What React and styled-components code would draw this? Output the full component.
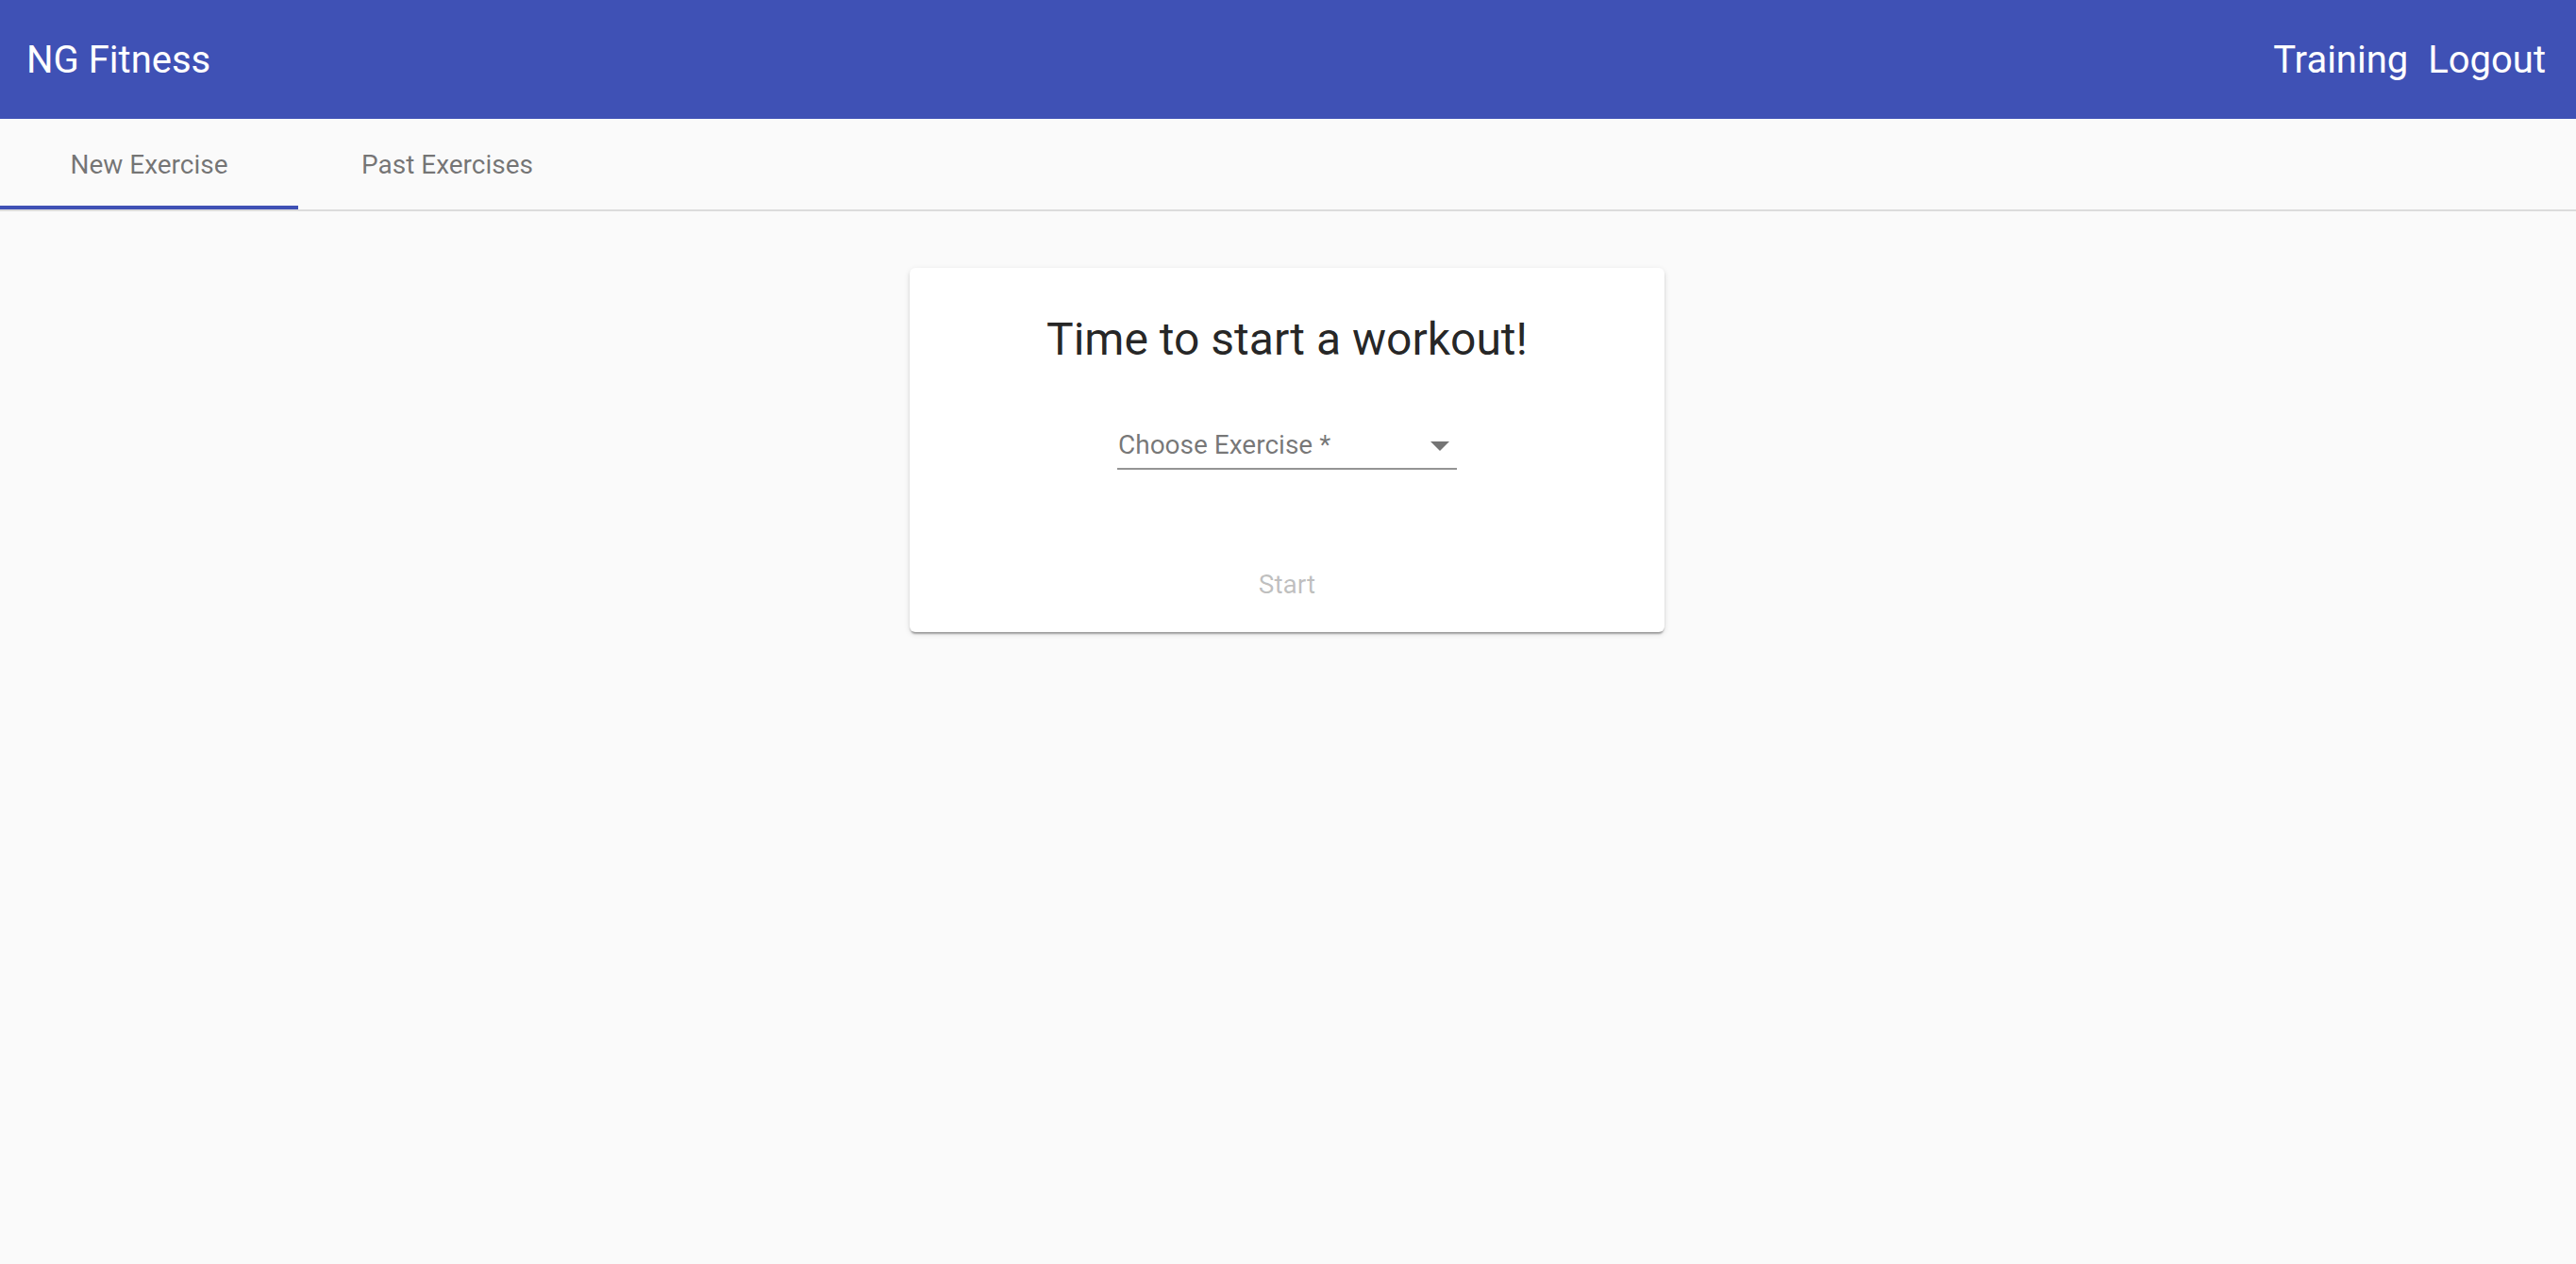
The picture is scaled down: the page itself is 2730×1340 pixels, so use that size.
import React from "react";
import styled, { createGlobalStyle } from "styled-components";

const Global = createGlobalStyle`
  html, body { margin: 0; padding: 0; background: #fafafa; }
  body { font-family: Roboto, "Noto Sans", sans-serif; }
  * { box-sizing: border-box; }
`;

const Page = styled.div`
  min-height: 1340px;
  background: #fafafa;
`;

const Toolbar = styled.header`
  height: 126px;
  background: #3f51b5;
  color: #fff;
  display: flex;
  align-items: center;
  justify-content: space-between;
  padding: 0 32px 0 28px;
`;

const Brand = styled.div`
  font-size: 40px;
  font-weight: 400;
`;

const NavList = styled.nav`
  display: flex;
  align-items: center;
  gap: 21px;
`;

const NavLink = styled.a`
  font-size: 40px;
  color: #fff;
  text-decoration: none;
`;

const TabBar = styled.div`
  display: flex;
  border-bottom: 2px solid #dcdcdc;
`;

const Tab = styled.div`
  position: relative;
  width: 316px;
  height: 96px;
  display: flex;
  align-items: center;
  justify-content: center;
  font-size: 28px;
  color: rgba(0, 0, 0, 0.55);
  &::after {
    content: "";
    position: absolute;
    left: 0;
    right: 0;
    bottom: 0;
    height: 4px;
    background: ${(p) => (p.$active ? "#3f51b5" : "transparent")};
  }
`;

const Content = styled.main`
  display: flex;
  justify-content: center;
  padding: 60px 2px 0 0;
`;

const Card = styled.section`
  width: 800px;
  background: #fff;
  border-radius: 6px;
  box-shadow: 0 4px 2px -2px rgba(0, 0, 0, 0.2), 0 2px 2px 0 rgba(0, 0, 0, 0.14),
    0 2px 6px 0 rgba(0, 0, 0, 0.12);
  padding: 44px 32px 15px;
  display: flex;
  flex-direction: column;
  align-items: center;
`;

const Title = styled.h1`
  margin: 0;
  font-size: 48px;
  line-height: 64px;
  font-weight: 400;
  color: rgba(0, 0, 0, 0.87);
`;

const Field = styled.div`
  width: 360px;
  margin-top: 62px;
  display: flex;
  align-items: center;
  justify-content: space-between;
  padding: 0 8px 6px 1px;
  border-bottom: 2px solid #949494;
`;

const Placeholder = styled.span`
  font-size: 28px;
  line-height: 36px;
  color: rgba(0, 0, 0, 0.54);
`;

const Arrow = styled.span`
  width: 0;
  height: 0;
  border-left: 10px solid transparent;
  border-right: 10px solid transparent;
  border-top: 10px solid rgba(0, 0, 0, 0.54);
  margin-top: 2px;
`;

const Actions = styled.div`
  margin-top: 85px;
  display: flex;
  justify-content: center;
`;

const Button = styled.button`
  height: 72px;
  min-width: 128px;
  padding: 0 32px;
  border: none;
  background: transparent;
  font-family: Roboto, sans-serif;
  font-size: 28px;
  color: rgba(0, 0, 0, 0.26);
`;

export default function App() {
  return (
    <Page>
      <Global />
      <Toolbar>
        <Brand>NG Fitness</Brand>
        <NavList>
          <NavLink>Training</NavLink>
          <NavLink>Logout</NavLink>
        </NavList>
      </Toolbar>
      <TabBar>
        <Tab $active>New Exercise</Tab>
        <Tab>Past Exercises</Tab>
      </TabBar>
      <Content>
        <Card>
          <Title>Time to start a workout!</Title>
          <Field>
            <Placeholder>Choose Exercise *</Placeholder>
            <Arrow />
          </Field>
          <Actions>
            <Button disabled>Start</Button>
          </Actions>
        </Card>
      </Content>
    </Page>
  );
}
